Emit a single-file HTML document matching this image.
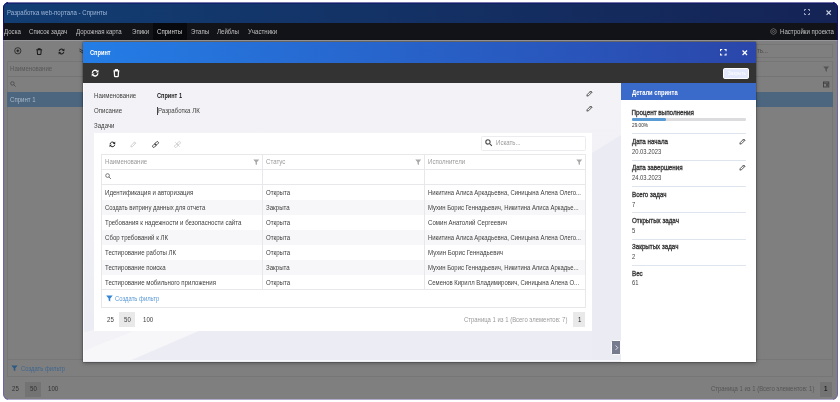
<!DOCTYPE html>
<html lang="ru"><head><meta charset="utf-8"><title>Разработка web-портала - Спринты</title>
<style>
*{box-sizing:border-box;margin:0;padding:0}
html,body{width:840px;height:402px;background:#fff;overflow:hidden}
body{font-family:"Liberation Sans",sans-serif;font-size:6.3px;color:#222;position:relative}
.a{position:absolute;white-space:nowrap;line-height:1}
.t{position:absolute;white-space:nowrap;line-height:10px;height:10px;margin-top:-5px;transform:scaleX(.968);transform-origin:0 50%}
#frame{will-change:transform;left:3px;top:2px;width:835px;height:397.6px;border-radius:6px;overflow:hidden;background:#7f7f7f}
#frameborder{left:3px;top:2px;width:835px;height:397.6px;border-radius:6px;border:1.2px solid rgba(96,76,200,.5);pointer-events:none}
#fb2{left:3px;top:2px;width:835px;height:397.6px;border-radius:6px;border:1.2px solid #10106a;clip-path:inset(0 0 359.6px 0)}
#title{left:0;top:0;width:100%;height:20.2px;background:linear-gradient(90deg,#123e73 0%,#152355 100%)}
#nav{left:0;top:20.2px;width:100%;height:17.2px;background:#121318}
#nav .t{color:#c0c0c0;top:9.2px}
#nav .act{left:150.2px;top:0;width:34px;height:17.2px;background:#08090c}
.svg{position:absolute;overflow:visible}
#modal{left:80.5px;top:39.3px;width:672.2px;height:319.9px;background:#f1f1f6;box-shadow:0 0 1.2px rgba(0,0,0,.7),0 1px 4px rgba(0,0,0,.35)}
#mhead{left:0;top:0;width:100%;height:21.2px;background:linear-gradient(90deg,#247de6 0%,#2b46aa 100%)}
#mtool{left:0;top:21.2px;width:100%;height:20.6px;background:#333}
#mbody{left:0;top:41.8px;width:100%;height:278.1px;background:linear-gradient(180deg,#f3f3f7 0%,#f1f1f6 40%,#ececf4 85%,#ececf4 100%);overflow:hidden}
#card{left:10.9px;top:49.9px;width:498.1px;height:197.8px;background:#fff}
.hl{position:absolute;height:.6px;background:#e8e8eb}
.vl{position:absolute;width:.6px;background:#e8e8eb}
#panel{left:537.6px;top:0;width:134.6px;height:278.1px;background:#fff}
#phead{left:0;top:0;width:100%;height:16.8px;background:#3b6bca}
.lab{font-weight:normal;color:#3a3a3a;-webkit-text-stroke:.33px #3a3a3a;font-size:6.3px;transform:scaleX(.985)}
.val{color:#444;font-size:6.3px;transform:scaleX(.925)}
.sep{position:absolute;left:10.7px;width:114px;height:.7px;background:#dfe5ee}
.c3{transform:scaleX(.941)}
.g{color:#9a9a9a}
.d{color:#3e3e3e}
</style></head><body>
<div id="frame" class="a"><div id="w" class="a" style="left:-.2px;top:.4px;width:835.4px;height:397.2px">
 <div id="title" class="a">
  <div class="t" style="left:3.8px;top:10.5px;color:#9fb6d6;font-size:6.5px;transform:scaleX(.931)">Разработка web-портала - Спринты</div>
  <svg class="svg" style="left:801.2px;top:7.1px" width="6" height="6" viewBox="0 0 12 12" fill="none" stroke="#aeb6d2" stroke-width="1.8"><path d="M1 4V1h3M8 1h3v3M11 8v3H8M4 11H1V8"/></svg>
  <svg class="svg" style="left:823.1px;top:7.6px" width="5.4" height="5.4" viewBox="0 0 10 10" fill="none" stroke="#c9cde0" stroke-width="2.2"><path d="M1 1l8 8M9 1l-8 8"/></svg>
 </div>
 <div id="nav" class="a">
  <div class="act a"></div>
  <div class="t" style="left:0.9px">Доска</div>
  <div class="t" style="left:26.4px">Список задач</div>
  <div class="t" style="left:73px">Дорожная карта</div>
  <div class="t" style="left:128.7px">Эпики</div>
  <div class="t" style="left:154.4px;color:#d4d4d4">Спринты</div>
  <div class="t" style="left:188px">Этапы</div>
  <div class="t" style="left:214.2px">Лейблы</div>
  <div class="t" style="left:244.7px">Участники</div>
  <svg class="svg" style="left:767.2px;top:5.5px" width="7" height="7" viewBox="0 0 14 14" fill="none" stroke="#767676" stroke-width="1.5"><path d="M7 1l5.2 3v6L7 13 1.8 10V4z"/><circle cx="7" cy="7" r="2"/></svg>
  <div class="t" style="left:777.2px">Настройки проекта</div>
 </div>

 <!-- dimmed background page -->
 <div class="a" id="bg" style="left:0;top:37.4px;width:100%;height:360px">
  <div class="a" style="left:3.9px;top:21.5px;width:826px;height:315.4px;border:.6px solid #767676"></div>
  <div class="a" style="left:0;top:0;width:100%;height:1.5px;background:#97979b"></div>
  <svg class="svg" style="left:10.9px;top:7.3px" width="7.6" height="7.6" viewBox="0 0 16 16" fill="none" stroke="#1c1c1c" stroke-width="1.6"><circle cx="8" cy="8" r="6.6"/><path d="M8 5v6M5 8h6" stroke-width="2"/></svg>
  <svg class="svg" style="left:33.5px;top:7.9px" width="6.4" height="7" viewBox="0 0 14 15" fill="none" stroke="#1c1c1c" stroke-width="2.3"><path d="M.6 3.6h12.8M5 3V1.3h4V3M2.6 4.2l.7 8.8c0 .6.5 1 1 1h5.4c.5 0 1-.4 1-1l.7-8.8"/></svg>
  <svg class="svg" style="left:54.7px;top:7.9px" width="7" height="7" viewBox="0 0 16 16" fill="none" stroke="#1c1c1c" stroke-width="2.3"><path d="M2.6 7.6A5.4 5.4 0 0 1 12 4.2M13.4 8.4A5.4 5.4 0 0 1 4 11.8"/><path d="M14.6 1.4V7H9zM1.4 14.6V9H7z" fill="#1c1c1c" stroke="none"/></svg>
  <svg class="svg" style="left:76px;top:8px" width="8" height="7" viewBox="0 0 16 14" fill="none" stroke="#333" stroke-width="2"><path d="M1 2l7 4 7-4M1 6l7 4 7-4"/></svg>
  <div class="t" style="left:7.1px;top:29.4px;color:#585858">Наименование</div>
  <div class="hl" style="left:3.9px;top:36.4px;width:826px;background:#747474"></div>
  <svg class="svg" style="left:7.6px;top:41.7px" width="6" height="6" viewBox="0 0 12 12" fill="none" stroke="#4a4a4a" stroke-width="1.7"><circle cx="4.8" cy="4.8" r="3.5"/><path d="M7.4 7.4l3.8 3.8"/></svg>
  <div class="a" style="left:3.9px;top:51.9px;width:826px;height:15px;background:#4c6680"></div>
  <div class="t" style="left:7.1px;top:59.9px;color:#a9b8c6">Спринт 1</div>
  <!-- right side -->
  <div class="a" style="left:752.7px;top:4px;width:77px;height:14.6px;border:.6px solid #767676;border-left:0"></div>
  <div class="t" style="left:754px;top:11.3px;color:#4c4c4c">ть...</div>
  <svg class="svg" style="left:820.2px;top:26px" width="6.4" height="6.4" viewBox="0 0 12 12" fill="#555"><path d="M.5 1h11L7.3 6v5L4.7 9.5V6z"/></svg>
  <svg class="svg" style="left:820.4px;top:41.4px" width="6.4" height="6.4" viewBox="0 0 12 12" fill="none" stroke="#3c3c3c" stroke-width="1.6"><rect x="1" y="1.8" width="10" height="9.4"/><path d="M1 4.2h10M6.5 6.5h2.5v2.5h-2.5z"/></svg>
  <!-- bottom -->
  <div class="hl" style="left:3.9px;top:319.1px;width:826px;background:#777"></div>
  <svg class="svg" style="left:8.2px;top:325.7px" width="7" height="6.6" viewBox="0 0 12 12" fill="#2b5a85"><path d="M.3 .8h11.4L7.4 6v5.2L4.6 9.5V6z"/></svg>
  <div class="t" style="left:17.8px;top:329.1px;color:#41678f;transform:scaleX(.93)">Создать фильтр</div>
  <div class="a" style="left:22.2px;top:342px;width:15.6px;height:15px;background:#737373"></div>
  <div class="t" style="left:8.7px;top:349.4px;color:#333">25</div>
  <div class="t" style="left:27px;top:349.4px;color:#333">50</div>
  <div class="t" style="left:45.3px;top:349.4px;color:#333">100</div>
  <div class="t" style="left:708px;top:349.4px;color:#555;transform:scaleX(.943)">Страница 1 из 1 (Всего элементов: 1)</div>
  <div class="a" style="left:817.4px;top:342px;width:12px;height:15px;background:#737373"></div>
  <div class="t" style="left:821.6px;top:349.4px;color:#222;font-weight:bold">1</div>
 </div>

 <!-- modal -->
 <div id="modal" class="a">
  <div id="mhead" class="a">
   <div class="t" style="left:7px;top:10.9px;color:#fff;font-weight:bold;font-size:6.4px;transform:scaleX(.885)">Спринт</div>
   <svg class="svg" style="left:636.3px;top:7.7px" width="6.6" height="6.6" viewBox="0 0 12 12" fill="none" stroke="#fff" stroke-width="2"><path d="M1 4V1h3M8 1h3v3M11 8v3H8M4 11H1V8"/></svg>
   <svg class="svg" style="left:658.5px;top:8.2px" width="5.6" height="5.6" viewBox="0 0 10 10" fill="none" stroke="#fff" stroke-width="2.2"><path d="M1 1l8 8M9 1l-8 8"/></svg>
  </div>
  <div id="mtool" class="a">
   <svg class="svg" style="left:7.3px;top:6.6px" width="8.2" height="8.2" viewBox="0 0 16 16" fill="none" stroke="#fff" stroke-width="2.6"><path d="M2.6 7.6A5.4 5.4 0 0 1 12 4.2M13.4 8.4A5.4 5.4 0 0 1 4 11.8"/><path d="M14.6 1.4V7H9zM1.4 14.6V9H7z" fill="#fff" stroke="none"/></svg>
   <svg class="svg" style="left:29.8px;top:6.3px" width="6.8" height="8.2" viewBox="0 0 14 17" fill="none" stroke="#fff" stroke-width="2.6"><path d="M1 4h12M5 3.5V1.5h4v2M2.5 4.5l.8 10.5c0 .6.5 1 1 1h5.4c.5 0 1-.4 1-1l.8-10.5"/></svg>
   <div class="a" style="left:639.7px;top:5.5px;width:25.7px;height:10.2px;border-radius:1.8px;background:#e3e8fb;border:.8px solid #fff"></div>
   <div class="t" style="left:644.2px;top:10.6px;color:#fff;font-size:5.2px;transform:scaleX(.9)">Закрыть</div>
  </div>
  <div id="mbody" class="a">
   <svg class="svg" style="left:0;top:0" width="538" height="278" viewBox="0 0 538 278"><polygon points="0,268 52,247 118,247 46,278 0,278" fill="#f7f7fa"/><polygon points="0,250 10,247 52,247 0,268" fill="#f3f3f7"/><polygon points="509,70 538,52 538,278 509,278" fill="#ebebf4"/><polygon points="0,0 0,278 1,278 1,0" fill="#fafafc"/><polygon points="0,277 538,277 538,278 0,278" fill="#f8f8fb"/></svg>
   <div class="t d" style="left:10.9px;top:12.1px">Наименование</div>
   <div class="t" style="left:73.8px;top:12.1px;font-weight:bold;color:#222;transform:scaleX(.886)">Спринт 1</div>
   <div class="t d" style="left:10.9px;top:27.1px">Описание</div>
   <div class="a" style="left:74px;top:23.1px;width:.6px;height:8px;background:#444"></div>
   <div class="t d" style="left:74.2px;top:27.1px">Разработка ЛК</div>
   <div class="t d" style="left:10.9px;top:42.4px">Задачи</div>
   <svg class="svg" style="left:502.6px;top:6.6px" width="7" height="7" viewBox="0 0 14 14" fill="none" stroke="#3c3c3c" stroke-width="1.7"><path d="M9.5 2l2.5 2.5L5 11.5 1.8 12.2 2.5 9zM8.3 3.2l2.5 2.5"/></svg>
   <svg class="svg" style="left:502.6px;top:21.7px" width="7" height="7" viewBox="0 0 14 14" fill="none" stroke="#3c3c3c" stroke-width="1.7"><path d="M9.5 2l2.5 2.5L5 11.5 1.8 12.2 2.5 9zM8.3 3.2l2.5 2.5"/></svg>

   <div id="card" class="a">
    <!-- toolbar -->
    <svg class="svg" style="left:14.3px;top:7.4px" width="6.8" height="6.8" viewBox="0 0 16 16" fill="none" stroke="#222" stroke-width="2.3"><path d="M2.6 7.6A5.4 5.4 0 0 1 12 4.2M13.4 8.4A5.4 5.4 0 0 1 4 11.8"/><path d="M14.6 1.4V7H9zM1.4 14.6V9H7z" fill="#222" stroke="none"/></svg>
    <svg class="svg" style="left:36.2px;top:7.4px" width="6.8" height="6.8" viewBox="0 0 14 14" fill="none" stroke="#c2c2c2" stroke-width="1.5"><path d="M9.5 2l2.5 2.5L5 11.5 1.8 12.2 2.5 9zM8.3 3.2l2.5 2.5"/></svg>
    <svg class="svg" style="left:58px;top:7.3px" width="7" height="7" viewBox="0 0 16 16" fill="none" stroke="#2a2a2a" stroke-width="1.8"><g transform="rotate(-45 8 8)"><rect x="-.4" y="5.4" width="9.2" height="5.2" rx="2.6"/><rect x="7.2" y="5.4" width="9.2" height="5.2" rx="2.6"/></g></svg>
    <svg class="svg" style="left:79.8px;top:7.3px" width="7" height="7" viewBox="0 0 16 16" fill="none" stroke="#c6c6c6" stroke-width="1.7"><g transform="rotate(-45 8 8)"><rect x="-.4" y="5.4" width="7.4" height="5.2" rx="2.6"/><rect x="9" y="5.4" width="7.4" height="5.2" rx="2.6"/></g><path d="M3 3l10 10"/></svg>
    <!-- search box -->
    <div class="a" style="left:387.2px;top:2.4px;width:104.2px;height:15.3px;border:.6px solid #ececf0;border-radius:1.5px"></div>
    <svg class="svg" style="left:390.6px;top:6.1px" width="7.4" height="7.4" viewBox="0 0 12 12" fill="none" stroke="#444" stroke-width="1.7"><circle cx="4.8" cy="4.8" r="3.5"/><path d="M7.4 7.4l3.8 3.8"/></svg>
    <div class="t g" style="left:401.3px;top:10px">Искать...</div>
    <!-- grid -->
    <div class="a" style="left:7px;top:21.1px;width:484.4px;height:153.9px;border:.6px solid #e8e8eb"></div>
    <div class="hl" style="left:7px;top:35.7px;width:484.4px"></div>
    <div class="hl" style="left:7px;top:50.7px;width:484.4px"></div>
    <div class="a" style="left:7.6px;top:66.7px;width:483.2px;height:15px;background:#f7f7f9"></div>
    <div class="a" style="left:7.6px;top:96.6px;width:483.2px;height:15px;background:#f7f7f9"></div>
    <div class="a" style="left:7.6px;top:126.5px;width:483.2px;height:15px;background:#f7f7f9"></div>
    <div class="hl" style="left:7px;top:155.7px;width:484.4px"></div>
    <div class="vl" style="left:168px;top:21.1px;height:134.6px"></div>
    <div class="vl" style="left:330px;top:21.1px;height:134.6px"></div>
    <div class="t g" style="left:10.8px;top:28.5px">Наименование</div>
    <div class="t g" style="left:171.8px;top:28.5px">Статус</div>
    <div class="t g" style="left:333.5px;top:28.5px">Исполнители</div>
    <svg class="svg" style="left:158.9px;top:25.3px" width="6.5" height="6.5" viewBox="0 0 12 12" fill="#a9a9a9"><path d="M.5 1h11L7.3 6v5L4.7 9.5V6z"/></svg>
    <svg class="svg" style="left:320.3px;top:25.3px" width="6.5" height="6.5" viewBox="0 0 12 12" fill="#a9a9a9"><path d="M.5 1h11L7.3 6v5L4.7 9.5V6z"/></svg>
    <svg class="svg" style="left:481.6px;top:25.3px" width="6.5" height="6.5" viewBox="0 0 12 12" fill="#a9a9a9"><path d="M.5 1h11L7.3 6v5L4.7 9.5V6z"/></svg>
    <svg class="svg" style="left:10.6px;top:40px" width="6.4" height="6.4" viewBox="0 0 12 12" fill="none" stroke="#666" stroke-width="1.6"><circle cx="4.8" cy="4.8" r="3.5"/><path d="M7.4 7.4l3.8 3.8"/></svg>

    <div class="t d" style="left:10.8px;top:59.6px">Идентификация и авторизация</div>
    <div class="t d" style="left:171.8px;top:59.6px">Открыта</div>
    <div class="t d c3" style="left:333.5px;top:59.6px">Никитина Алиса Аркадьевна, Синицына Алена Олего...</div>
    <div class="t d" style="left:10.8px;top:74.6px;transform:scaleX(.945)">Создать витрину данных для отчета</div>
    <div class="t d" style="left:171.8px;top:74.6px">Закрыта</div>
    <div class="t d c3" style="left:333.5px;top:74.6px">Мухин Борис Геннадьевич, Никитина Алиса Аркадье...</div>
    <div class="t d" style="left:10.8px;top:89.5px">Требования к надежности и безопасности сайта</div>
    <div class="t d" style="left:171.8px;top:89.5px">Открыта</div>
    <div class="t d" style="left:333.5px;top:89.5px">Сомин Анатолий Сергеевич</div>
    <div class="t d" style="left:10.8px;top:104.5px">Сбор требований к ЛК</div>
    <div class="t d" style="left:171.8px;top:104.5px">Открыта</div>
    <div class="t d c3" style="left:333.5px;top:104.5px">Никитина Алиса Аркадьевна, Синицына Алена Олего...</div>
    <div class="t d" style="left:10.8px;top:119.4px">Тестирование работы ЛК</div>
    <div class="t d" style="left:171.8px;top:119.4px">Открыта</div>
    <div class="t d" style="left:333.5px;top:119.4px">Мухин Борис Геннадьевич</div>
    <div class="t d" style="left:10.8px;top:134.3px">Тестирование поиска</div>
    <div class="t d" style="left:171.8px;top:134.3px">Закрыта</div>
    <div class="t d c3" style="left:333.5px;top:134.3px">Мухин Борис Геннадьевич, Никитина Алиса Аркадье...</div>
    <div class="t d" style="left:10.8px;top:149.2px">Тестирование мобильного приложения</div>
    <div class="t d" style="left:171.8px;top:149.2px">Открыта</div>
    <div class="t d c3" style="left:333.5px;top:149.2px">Семенов Кирилл Владимирович, Синицына Алена О...</div>

    <svg class="svg" style="left:11.5px;top:162.1px" width="6.9" height="7" viewBox="0 0 12 12" fill="#3585d6"><path d="M.3 .8h11.4L7.4 6v5.2L4.6 9.5V6z"/></svg>
    <div class="t" style="left:21.1px;top:165.8px;color:#5b9ad8;transform:scaleX(.936)">Создать фильтр</div>
    <div class="a" style="left:25.2px;top:178.2px;width:15.7px;height:15px;background:#e9e9e9"></div>
    <div class="t d" style="left:12.6px;top:186.4px">25</div>
    <div class="t d" style="left:30.2px;top:186.4px">50</div>
    <div class="t d" style="left:49.2px;top:186.4px">100</div>
    <div class="t g" style="left:369.8px;top:186.4px;transform:scaleX(.943)">Страница 1 из 1 (Всего элементов: 7)</div>
    <div class="a" style="left:479.2px;top:178.2px;width:11.8px;height:15px;background:#e9e9e9"></div>
    <div class="t" style="left:483.4px;top:186.4px;color:#222">1</div>
   </div>

   <!-- collapse handle -->
   <div class="a" style="left:528.1px;top:256.1px;width:9.5px;height:15.2px;background:#777b8e;border:.9px solid #fbfbfd;border-radius:1.5px 0 0 1.5px"></div>
   <svg class="svg" style="left:531.8px;top:261.6px" width="3.4" height="5.4" viewBox="0 0 6 10" fill="none" stroke="#fff" stroke-width="1.4"><path d="M1 1l4 4-4 4"/></svg>

   <div id="panel" class="a">
    <div id="phead" class="a"><div class="t" style="left:10.7px;top:9.6px;color:#fff;font-weight:bold;font-size:6.3px;transform:scaleX(.92)">Детали спринта</div></div>
    <div class="t lab" style="left:10.7px;top:29.2px;transform:none">Процент выполнения</div>
    <div class="a" style="left:10.7px;top:34.7px;width:114.2px;height:2.4px;background:#dcdcde;border-radius:1.2px"></div>
    <div class="a" style="left:10.7px;top:34.7px;width:34.2px;height:2.4px;background:#5a9bd6;border-radius:1.2px"></div>
    <div class="t" style="left:10.7px;top:41.3px;color:#2e2e2e;font-size:5.8px;transform:scaleX(.815)">29.00%</div>
    <div class="sep" style="top:50px"></div>
    <div class="t lab" style="left:10.7px;top:58.8px">Дата начала</div>
    <div class="t val" style="left:10.7px;top:68.6px">20.03.2023</div>
    <svg class="svg" style="left:117.8px;top:54.5px" width="7" height="7" viewBox="0 0 14 14" fill="none" stroke="#3c3c3c" stroke-width="1.7"><path d="M9.5 2l2.5 2.5L5 11.5 1.8 12.2 2.5 9zM8.3 3.2l2.5 2.5"/></svg>
    <div class="sep" style="top:76.3px"></div>
    <div class="t lab" style="left:10.7px;top:85px">Дата завершения</div>
    <div class="t val" style="left:10.7px;top:94.9px">24.03.2023</div>
    <svg class="svg" style="left:117.8px;top:80.5px" width="7" height="7" viewBox="0 0 14 14" fill="none" stroke="#3c3c3c" stroke-width="1.7"><path d="M9.5 2l2.5 2.5L5 11.5 1.8 12.2 2.5 9zM8.3 3.2l2.5 2.5"/></svg>
    <div class="sep" style="top:102.6px"></div>
    <div class="t lab" style="left:10.7px;top:111.3px">Всего задач</div>
    <div class="t val" style="left:10.7px;top:121.2px">7</div>
    <div class="sep" style="top:128.9px"></div>
    <div class="t lab" style="left:10.7px;top:137.6px">Открытых задач</div>
    <div class="t val" style="left:10.7px;top:147.5px">5</div>
    <div class="sep" style="top:155.1px"></div>
    <div class="t lab" style="left:10.7px;top:163.8px">Закрытых задач</div>
    <div class="t val" style="left:10.7px;top:173.7px">2</div>
    <div class="sep" style="top:181.4px"></div>
    <div class="t lab" style="left:10.7px;top:190.1px">Вес</div>
    <div class="t val" style="left:10.7px;top:200px">61</div>
   </div>
  </div>
 </div>
</div></div>
<div id="frameborder" class="a"></div><div id="fb2" class="a"></div>
<div class="a" style="left:8px;top:2px;width:825px;height:1px;background:rgba(255,255,255,.42)"></div><div class="a" style="left:6px;top:3px;width:829px;height:1px;background:rgba(16,16,106,.5)"></div><div class="a" style="left:8px;top:399px;width:825px;height:1px;background:rgba(255,255,255,.45)"></div>
</body></html>
